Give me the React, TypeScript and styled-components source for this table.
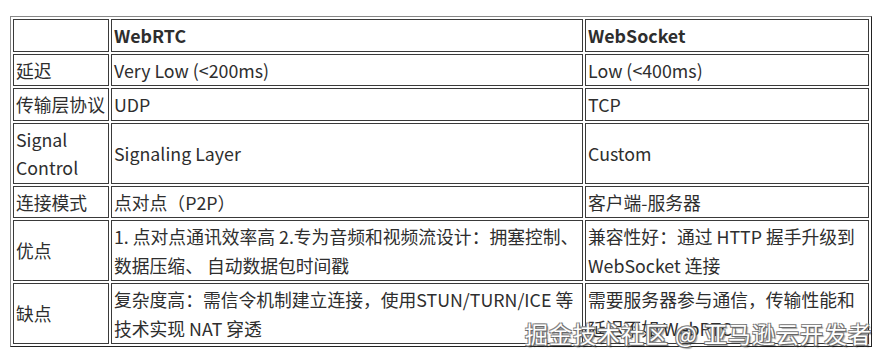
import styled, { createGlobalStyle } from "styled-components";

const GlobalStyle = createGlobalStyle`
  html, body {
    margin: 0;
    padding: 0;
    background: #fff;
  }
  body {
    font-family: "Noto Sans CJK SC", "Open Sans", sans-serif;
    color: #333;
  }
`;

type Row = { label: string; rtc: string; ws: string };

const rows: Row[] = [
  { label: "延迟", rtc: "Very Low (<200ms)", ws: "Low (<400ms)" },
  { label: "传输层协议", rtc: "UDP", ws: "TCP" },
  { label: "Signal Control", rtc: "Signaling Layer", ws: "Custom" },
  { label: "连接模式", rtc: "点对点（P2P）", ws: "客户端-服务器" },
  {
    label: "优点",
    rtc: "1. 点对点通讯效率高 2.专为音频和视频流设计：拥塞控制、 数据压缩、 自动数据包时间戳",
    ws: "兼容性好：通过 HTTP 握手升级到 WebSocket 连接",
  },
  {
    label: "缺点",
    rtc: "复杂度高：需信令机制建立连接，使用STUN/TURN/ICE 等技术实现 NAT 穿透",
    ws: "需要服务器参与通信，传输性能和延迟不如 WebRTC",
  },
];

const App = () => {
  return (
    <Page>
      <GlobalStyle />
      <Table>
        <colgroup>
          <col style={{ width: 96 }} />
          <col style={{ width: 472 }} />
          <col style={{ width: 284 }} />
        </colgroup>
        <thead>
          <tr>
            <Cell />
            <Cell $head>WebRTC</Cell>
            <Cell $head>WebSocket</Cell>
          </tr>
        </thead>
        <tbody>
          {rows.map((r) => (
            <tr key={r.label}>
              <Cell>{r.label}</Cell>
              <Cell>{r.rtc}</Cell>
              <Cell>{r.ws}</Cell>
            </tr>
          ))}
        </tbody>
      </Table>
      <Watermark>掘金技术社区 @ 亚马逊云开发者</Watermark>
    </Page>
  );
};

export default App;

const Page = styled.div`
  position: relative;
  width: 885px;
  height: 361px;
  padding: 16px 0 0 10px;
  box-sizing: border-box;
  overflow: hidden;
`;

const Table = styled.table`
  width: 862px;
  table-layout: fixed;
  border-collapse: separate;
  border-spacing: 2px;
  border: 1px solid;
  border-color: #888 #222 #222 #888;
`;

const Cell = styled.td<{ $head?: boolean }>`
  border: 1px solid #3a3a3a;
  padding: 1px 2px;
  font-size: 17.8px;
  line-height: 28.5px;
  font-weight: ${(p) => (p.$head ? 700 : 400)};
  color: #2e2e2e;
  vertical-align: middle;
  overflow-wrap: anywhere;
`;

const Watermark = styled.div`
  position: absolute;
  right: 13px;
  bottom: 15px;
  font-family: "Noto Sans CJK SC", sans-serif;
  font-size: 23px;
  letter-spacing: 1px;
  line-height: 26px;
  color: #fff;
  text-shadow: 1px 1px 0 #666, -1px -1px 0 #888, 1px -1px 0 #777, -1px 1px 0 #777,
    2px 2px 1px rgba(0, 0, 0, 0.35);
  white-space: nowrap;
`;
